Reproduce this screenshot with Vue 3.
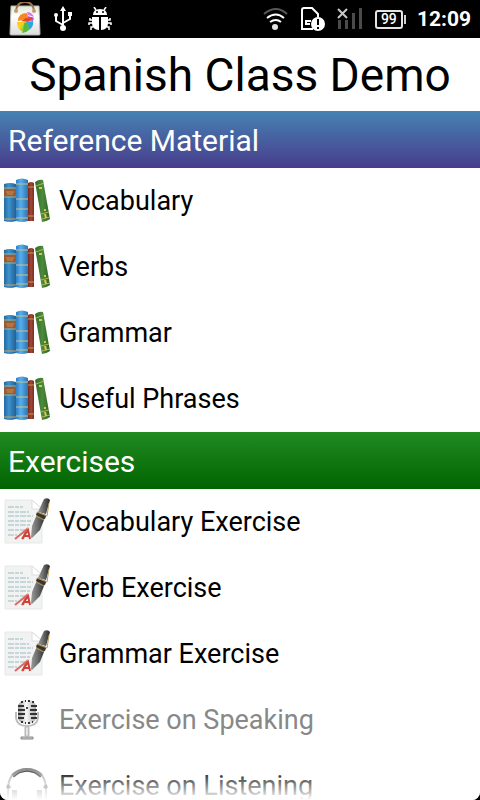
<template>
  <div class="phone">
    <header class="status">
      <div class="status__group">
        <svg width="32" height="34" viewBox="0 0 32 34">
          <defs>
            <linearGradient id="bag" x1="0" y1="0" x2="0" y2="1">
              <stop offset="0" stop-color="#dfe6d2" />
              <stop offset="0.35" stop-color="#ffffff" />
              <stop offset="1" stop-color="#dcdcdc" />
            </linearGradient>
          </defs>
          <path d="M2 4h28l1 28q0 1-1 1H2q-1 0-1-1z" fill="url(#bag)" stroke="#b5b8ae" />
          <path d="M7 9Q8 0 16 0t9 9" fill="none" stroke="#9b7350" stroke-width="2" />
          <circle cx="7" cy="9" r="2" fill="#c39a70" />
          <circle cx="25" cy="9" r="2" fill="#c39a70" />
          <path d="M9 19q0-8 9-8l1 3-2 3z" fill="#f58a1c" />
          <path d="M18 10q5 0 7 5l-6-2z" fill="#d77be0" />
          <path d="M17 18l2-4 6 2-1 3z" fill="#b55fd0" />
          <path d="M12 19l5-3 7-1q-1 3-5 5z" fill="#ef4136" />
          <path d="M17 20l7-1q1 6-4 9z" fill="#29a9e0" />
          <path d="M15 20l4 1 1 7q-3 3-7 3z" fill="#58bb3d" />
          <path d="M8 20l8 0-5 8q-3-3-3-8z" fill="#fbcf19" />
          <path d="M15 21l-1 9-3-2z" fill="#a8cf2f" />
        </svg>
        <svg width="20" height="26" viewBox="0 0 20 26">
          <g fill="none" stroke="#fff" stroke-width="2">
            <path d="M10 4v17M10 19l-7-4V9M10 17l7-4V8" />
          </g>
          <path d="M10 0l3 5H7z" fill="#fff" />
          <circle cx="3" cy="9" r="2" fill="#fff" />
          <rect x="15" y="6" width="4" height="4" fill="#fff" />
          <circle cx="10" cy="22" r="3" fill="#fff" />
        </svg>
        <svg class="status__bug" width="24" height="24" viewBox="0 0 24 24">
          <g fill="none" stroke="#fff" stroke-width="1.500">
            <path d="M8 3L6 0M16 3l2-3M5 13H2v-2M5 16H1v2M5 20H3v3M19 13h3v-2M19 16h4v2M19 20h2v3" />
          </g>
          <path d="M5 8q0-6 7-6t7 6z" fill="#fff" />
          <path d="M4 10h7v13q-7 0-7-7zM13 10h7v6q0 7-7 7z" fill="#fff" />
          <circle cx="9" cy="5" r="1" fill="#000" />
          <circle cx="15" cy="5" r="1" fill="#000" />
        </svg>
      </div>
      <div class="status__group">
        <svg width="26" height="22" viewBox="0 0 26 22">
          <g fill="none" stroke-width="2">
            <path d="M1 6Q13-4 24 6" stroke="#555" />
            <path d="M4 10q9-7 17 0" stroke="#fff" />
            <path d="M7 14q6-4 11 0" stroke="#fff" />
          </g>
          <circle cx="12" cy="19" r="3" fill="#e4e4e4" />
        </svg>
        <svg width="24" height="24" viewBox="0 0 24 24">
          <path d="M17 10V7l-6-6H3Q1 1 1 3v19h11" fill="none" stroke="#fff" stroke-width="2" />
          <path d="M4 13h6v2H6v1h3v2H4z" fill="#fff" />
          <circle cx="17" cy="17" r="7" fill="#fff" />
          <path d="M16 12h2v6h-2zM16 20h2v2h-2z" fill="#000" />
        </svg>
        <svg width="26" height="22" viewBox="0 0 26 22">
          <g fill="#4b4b4b">
            <rect x="1" y="12" width="3" height="9" />
            <rect x="8" y="12" width="3" height="9" />
            <rect x="15" y="5" width="3" height="16" />
            <rect x="22" y="0" width="3" height="21" />
          </g>
          <path d="M1 1l9 9M10 1l-9 9" stroke="#c8c8c8" stroke-width="2" />
        </svg>
        <div class="battery">99</div>
        <time class="status__clock">12:09</time>
      </div>
    </header>

    <main class="page">
      <h1 class="page__title">Spanish Class Demo</h1>
      <section v-for="section in sections" :key="section.title">
        <h2 class="section__title" :class="`section__title--${section.theme}`">{{ section.title }}</h2>
        <button
          v-for="item in section.items"
          :key="item.label"
          type="button"
          class="row"
          :disabled="item.disabled"
        >
          <svg v-if="item.icon === 'books'" class="row__icon" viewBox="0 0 48 48">
            <defs>
              <linearGradient id="blue" x1="0" x2="1" y1="0" y2="0">
                <stop offset="0" stop-color="#2368a0" />
                <stop offset="0.4" stop-color="#3d93cf" />
                <stop offset="1" stop-color="#235f94" />
              </linearGradient>
              <linearGradient id="sky" x1="0" x2="1" y1="0" y2="0">
                <stop offset="0" stop-color="#2f7fc4" />
                <stop offset="0.4" stop-color="#58aeea" />
                <stop offset="1" stop-color="#2c74b2" />
              </linearGradient>
              <linearGradient id="red" x1="0" x2="1" y1="0" y2="0">
                <stop offset="0" stop-color="#74291f" />
                <stop offset="0.5" stop-color="#a04838" />
                <stop offset="1" stop-color="#7c2e24" />
              </linearGradient>
              <linearGradient id="green" x1="0" x2="1" y1="0" y2="0">
                <stop offset="0" stop-color="#336f2a" />
                <stop offset="0.5" stop-color="#4b8a3c" />
                <stop offset="1" stop-color="#2d6424" />
              </linearGradient>
            </defs>
            <path d="M1 7q6-2 12 0v37q-6 2-12 0z" fill="url(#blue)" />
            <path d="M1 12h12v7H1z" fill="#9a5a36" />
            <path d="M1 11h12M1 20h12M1 42h12" stroke="#c9a75a" />
            <path d="M3 15h8M4 17h6" stroke="#d0914e" />
            <path d="M25 6q3-2 6 0v38h-6z" fill="url(#red)" />
            <path d="M25 10h6M25 39h6" stroke="#cf9546" />
            <path d="M32 5q4-3 8-2l7 39q-4 3-8 3z" fill="url(#green)" />
            <path d="M33 9l8-3M38 37l8-2M39 42l8-2" stroke="#b7b34c" />
            <path d="M36 11l3 0M41 33l2 0M42 37l1 4" stroke="#d5c956" stroke-width="2" />
            <path d="M13 3q6-3 12 0v41q-6 2-12 0z" fill="url(#sky)" />
            <path d="M13 7h12M13 22h12M13 32h12M13 41h12" stroke="#c9c389" />
          </svg>

          <svg v-else-if="item.icon === 'paper'" class="row__icon" viewBox="0 0 48 48">
            <defs>
              <linearGradient id="pen" x1="0" x2="1" y1="0" y2="0">
                <stop offset="0" stop-color="#9a9a9a" />
                <stop offset="0.45" stop-color="#6a6a6a" />
                <stop offset="1" stop-color="#262626" />
              </linearGradient>
            </defs>
            <path d="M2 2h27l10 9v34H2z" fill="#f1f2f2" stroke="#e6e8e8" />
            <path d="M29 2v9h10z" fill="#fff" stroke="#dcdfdf" />
            <path
              d="M5 9h15M5 14h21M5 18h25M5 23h24M5 27h22M5 32h18M5 37h9"
              stroke="#c6d6d9"
              stroke-width="2"
              stroke-dasharray="6 1 4 1"
            />
            <path d="M12 41l11-9-3 9" fill="none" stroke="#dd6a62" stroke-width="2" />
            <path d="M19 41l6-9 2 9M21 38h5" fill="none" stroke="#cf4238" stroke-width="2" />
            <path d="M41 1q4-2 6 1l-4 14-8-2z" fill="url(#pen)" />
            <path d="M35 14l8 3-6 15-8 8q-1 0-1-1l1-11z" fill="url(#pen)" />
            <path d="M34 14l9 4-1 3-9-4z" fill="#3a342c" />
            <path d="M34 14l10 4M33 18l8 4M46 5l-2 13" fill="none" stroke="#b99a58" />
          </svg>

          <svg v-else-if="item.icon === 'mic'" class="row__icon" viewBox="0 0 48 48">
            <defs>
              <linearGradient id="chrome" x1="0" x2="1" y1="0" y2="0">
                <stop offset="0" stop-color="#999" />
                <stop offset="0.45" stop-color="#fafafa" />
                <stop offset="1" stop-color="#aaa" />
              </linearGradient>
            </defs>
            <path d="M15 12Q15 4 24 4t9 8v8q0 8-9 8t-9-8z" fill="url(#chrome)" />
            <path
              d="M18 6h2M22 5h1M25 5h2M29 6h2M15 10h6M28 10h6M15 14h7M27 14h7M15 18h7M27 18h7M15 22h6M28 22h6M18 26h2M22 27h1M25 27h2M29 26h1"
              stroke="#333"
              stroke-width="2"
            />
            <circle cx="24" cy="12" r="1" fill="#111" />
            <path d="M13 16v6q1 8 11 8t11-8v-6" fill="none" stroke="#bdbdbd" stroke-width="2" />
            <path d="M22 31h4v9h-4z" fill="url(#chrome)" stroke="#bbb" />
            <path d="M18 41h12v2H18z" fill="#ccc" stroke="#8a8a8a" />
          </svg>

          <svg v-else class="row__icon" viewBox="0 0 48 48">
            <path d="M5 25Q7 7 24 7t19 18" fill="none" stroke="#b5b5b5" stroke-width="2" />
            <path d="M10 14q6-6 14-6t14 6" fill="none" stroke="#8a8a8a" stroke-width="4" />
            <path d="M10 15q6-6 14-6t14 6" fill="none" stroke="#444" />
            <path d="M5 22l-2 3 2 3 3-3M43 22l2 3-2 3-3-3" fill="#777" />
            <path d="M5 28v14M43 28v14" stroke="#aaa" stroke-width="2" />
            <path d="M9 28h5v14H9zM34 28h5v14h-5z" fill="#999" />
          </svg>
          <span>{{ item.label }}</span>
        </button>
      </section>
      <div class="page__fade"></div>
    </main>
  </div>
</template>

<script setup>
const sections = [
  {
    title: 'Reference Material',
    theme: 'blue',
    items: [
      { label: 'Vocabulary', icon: 'books' },
      { label: 'Verbs', icon: 'books' },
      { label: 'Grammar', icon: 'books' },
      { label: 'Useful Phrases', icon: 'books' },
    ],
  },
  {
    title: 'Exercises',
    theme: 'green',
    items: [
      { label: 'Vocabulary Exercise', icon: 'paper' },
      { label: 'Verb Exercise', icon: 'paper' },
      { label: 'Grammar Exercise', icon: 'paper' },
      { label: 'Exercise on Speaking', icon: 'mic', disabled: true },
      { label: 'Exercise on Listening', icon: 'headphones' },
    ],
  },
]
</script>

<style>
body {
  background: #000;
}
</style>

<style scoped>
.phone {
  display: flex;
  flex-direction: column;
  height: 100vh;
  font-family: Roboto, sans-serif;
  color: #000;
  background: #000;
}

/* status bar */
.status {
  flex: none;
  display: flex;
  justify-content: space-between;
  align-items: center;
  padding: 0 9px;
  color: #fff;
}

.status__group {
  display: flex;
  align-items: center;
  gap: 12px;
}

.status__bug {
  margin-left: 3px;
}

.battery {
  position: relative;
  box-sizing: border-box;
  width: 28px;
  height: 19px;
  margin-right: 2px;
  border: 2px solid #e4e4e4;
  border-radius: 3px;
  font-size: 14px;
  font-weight: 500;
  line-height: 15px;
  text-align: center;
}

.battery::after {
  content: '';
  position: absolute;
  top: 3px;
  right: -5px;
  width: 2px;
  height: 9px;
  background: #d0d0d0;
}

.status__clock {
  font-size: 21px;
  font-weight: 700;
  line-height: 38px;
}

/* content */
.page {
  position: relative;
  flex: 1;
  min-height: 0;
  overflow: hidden;
  background: #fff;
  border-radius: 0 0 8px 8px;
}

.page__title {
  margin: 0;
  padding-top: 2px;
  font-size: 46px;
  font-weight: 400;
  line-height: 71px;
  text-align: center;
  white-space: nowrap;
}

.section__title {
  margin: 0;
  padding: 2px 8px 0;
  font-size: 30px;
  font-weight: 400;
  line-height: 55px;
  color: #fff;
}

.section__title--blue {
  background: linear-gradient(#4682b4, #483d8b);
}

.section__title--green {
  background: linear-gradient(#228b22, #006400);
}

.row {
  display: flex;
  align-items: center;
  gap: 8px;
  width: 100%;
  height: 66px;
  padding: 0 3px;
  border: none;
  background: none;
  font-family: inherit;
  font-size: 27px;
  color: inherit;
  text-align: left;
  cursor: pointer;
}

.row:disabled {
  color: #888;
  cursor: default;
}

.row__icon {
  flex: none;
  width: 48px;
  height: 48px;
}

.page__fade {
  position: absolute;
  right: 0;
  bottom: 0;
  left: 0;
  height: 32px;
  background: linear-gradient(rgba(255, 255, 255, 0), #fff);
  pointer-events: none;
}
</style>
